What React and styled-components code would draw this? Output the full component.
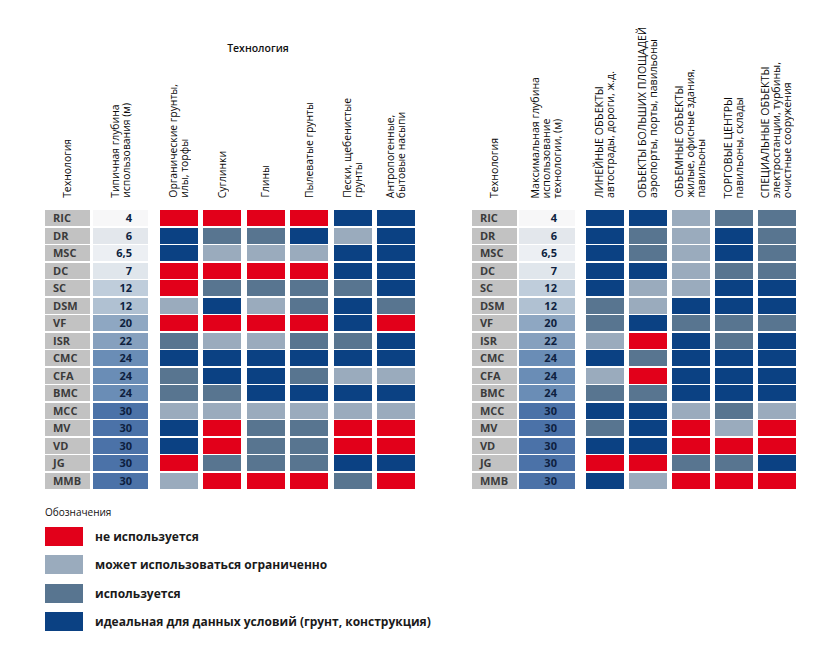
import React from 'react';
import styled, { createGlobalStyle } from 'styled-components';

const GlobalStyle = createGlobalStyle`
  html, body { margin: 0; padding: 0; background: #fff; }
  body { font-family: "Open Sans", "Noto Sans", sans-serif; color: #111; }
`;

const COLORS = { R: '#e2001a', L: '#9aabbd', M: '#587590', D: '#0b4183' };

const TECH = ['RIC', 'DR', 'MSC', 'DC', 'SC', 'DSM', 'VF', 'ISR', 'CMC', 'CFA', 'BMC', 'MCC', 'MV', 'VD', 'JG', 'MMB'];
const DEPTH = ['4', '6', '6,5', '7', '12', '12', '20', '22', '24', '24', '24', '30', '30', '30', '30', '30'];
const DEPTH_BG = ['#f7f7f8', '#e3e7ec', '#eceff3', '#e0e6ec', '#bfcddb', '#b0c1d2', '#8ea7c2', '#86a0be', '#6a8db6', '#6a8db6', '#6a8db6', '#4b72a8', '#4b72a8', '#4b72a8', '#4b72a8', '#4b72a8'];

const LEFT_DATA = [
  'RRRRDD', 'DMMDLD', 'DLLLDD', 'RRRRDD', 'RMMMMD', 'LDLMDM', 'RRRRDR', 'MLLMMD',
  'DDDDDD', 'MDDMLL', 'MMDDDD', 'LLLLLL', 'DRMMRR', 'DRMMRR', 'RMMMDD', 'LRRRMR',
];
const RIGHT_DATA = [
  'DDLMM', 'DMLDM', 'DMLDM', 'DDLMM', 'DLLDD', 'MLDDD', 'MDMMM', 'LRDMD',
  'DMDDD', 'LRDDD', 'MMDDD', 'DDLML', 'MDRLR', 'DDRRR', 'RRMMD', 'DLRRR',
];

const LEFT_HEADS = [
  ['Технология'],
  ['Типичная глубина', 'использования (м)'],
  ['Органические грунты,', 'илы, торфы'],
  ['Суглинки'],
  ['Глины'],
  ['Пылеватые грунты'],
  ['Пески, щебенистые', 'грунты'],
  ['Антропогенные,', 'бытовые насыпи'],
];
const RIGHT_HEADS = [
  ['Технология'],
  ['Максимальная глубина', 'использование', 'технологии, (м)'],
  ['ЛИНЕЙНЫЕ ОБЪЕКТЫ', 'автострады, дороги, ж.д.'],
  ['ОБЪЕКТЫ БОЛЬШИХ ПЛОЩАДЕЙ', 'аэропорты, порты, павильоны'],
  ['ОБЪЕМНЫЕ ОБЪЕКТЫ', 'жилые, офисные здания,', 'павильоны'],
  ['ТОРГОВЫЕ ЦЕНТРЫ', 'павильоны, склады'],
  ['СПЕЦИАЛЬНЫЕ ОБЪЕКТЫ', 'электростанции, турбины,', 'очистные сооружения'],
];

const LEFT_LAYOUT = { depthW: 55, depthMl: 3, dataMl: 12, gap: 5.4, padR: 16, fs: 10.4 };
const RIGHT_LAYOUT = { depthW: 56, depthMl: 2, dataMl: 11, gap: 5, padR: 18, fs: 10.6 };

const Page = styled.div`
  width: 838px;
  height: 669px;
  box-sizing: border-box;
  padding: 25px 0 0 45px;
`;

const Tables = styled.div`
  display: flex;
  gap: 57px;
`;

const Table = styled.div`
  display: flex;
  flex-direction: column;
`;

const HeaderArea = styled.div`
  height: 175px;
  display: flex;
  flex-direction: column;
  margin-bottom: 10px;
`;

const Title = styled.div`
  padding: 16px 0 0 56px;
  text-align: center;
  font-size: 10.5px;
  font-weight: 600;
  line-height: 14px;
  color: #111;
`;

const HeaderRow = styled.div`
  flex: 1;
  display: flex;
  align-items: flex-end;
`;

const HeadGroup = styled.div`
  display: flex;
  align-items: flex-end;
  gap: ${(p) => p.$gap}px;
  margin-left: ${(p) => p.$ml}px;
  height: 100%;
`;

const HeadCell = styled.div`
  width: ${(p) => p.$w}px;
  margin-left: ${(p) => p.$ml || 0}px;
  flex: none;
  height: 100%;
  display: flex;
  justify-content: center;
  align-items: flex-end;
  padding-bottom: 2px;
  box-sizing: border-box;
`;

const HeadText = styled.span`
  writing-mode: vertical-rl;
  transform: rotate(180deg);
  white-space: nowrap;
  font-size: ${(p) => p.$fs}px;
  line-height: 11px;
  color: #0a0a0a;
`;

const Body = styled.div`
  display: flex;
  flex-direction: column;
  gap: 1.5px;
`;

const Row = styled.div`
  display: flex;
  height: 16px;
`;

const Label = styled.div`
  width: 45px;
  flex: none;
  background: #c2c2c2;
  color: #3b3b3b;
  font-size: 11px;
  font-weight: 700;
  line-height: 16px;
  padding-left: 8px;
  box-sizing: border-box;
`;

const Depth = styled.div`
  width: ${(p) => p.$w}px;
  margin-left: ${(p) => p.$ml}px;
  flex: none;
  background: ${(p) => p.$bg};
  color: #0e1f40;
  font-size: 11px;
  font-weight: 700;
  line-height: 16px;
  text-align: right;
  padding-right: ${(p) => p.$pr}px;
  box-sizing: border-box;
`;

const Cells = styled.div`
  display: flex;
  gap: ${(p) => p.$gap}px;
  margin-left: ${(p) => p.$ml}px;
`;

const Cell = styled.div`
  width: 38px;
  height: 16px;
  background: ${(p) => p.$c};
`;

const Legend = styled.div`
  margin-top: 17px;
  display: flex;
  flex-direction: column;
`;

const LegendTitle = styled.div`
  font-size: 10px;
  line-height: 12px;
  color: #111;
  margin-bottom: 9px;
`;

const LegendItems = styled.div`
  display: flex;
  flex-direction: column;
  gap: 9.5px;
`;

const LegendItem = styled.div`
  display: flex;
  align-items: center;
  gap: 12px;
`;

const Swatch = styled.div`
  width: 38px;
  height: 19px;
  background: ${(p) => p.$c};
`;

const LegendText = styled.span`
  font-size: 12px;
  font-weight: 700;
  color: #1a1a1a;
`;

function Head({ lines, fs }) {
  return (
    <HeadText $fs={fs}>
      {lines.map((l, i) => (
        <React.Fragment key={i}>
          {i > 0 && <br />}
          {l}
        </React.Fragment>
      ))}
    </HeadText>
  );
}

function MatrixTable({ heads, data, layout, title }) {
  return (
    <Table>
      <HeaderArea>
        {title && <Title>{title}</Title>}
        <HeaderRow>
          <HeadCell $w={45}><Head lines={heads[0]} fs={layout.fs} /></HeadCell>
          <HeadCell $w={layout.depthW} $ml={layout.depthMl}><Head lines={heads[1]} fs={layout.fs} /></HeadCell>
          <HeadGroup $gap={layout.gap} $ml={layout.dataMl}>
            {heads.slice(2).map((h, i) => (
              <HeadCell key={i} $w={38}><Head lines={h} fs={layout.fs} /></HeadCell>
            ))}
          </HeadGroup>
        </HeaderRow>
      </HeaderArea>
      <Body>
        {TECH.map((t, r) => (
          <Row key={t}>
            <Label>{t}</Label>
            <Depth $w={layout.depthW} $ml={layout.depthMl} $bg={DEPTH_BG[r]} $pr={layout.padR}>{DEPTH[r]}</Depth>
            <Cells $gap={layout.gap} $ml={layout.dataMl}>
              {data[r].split('').map((k, c) => (
                <Cell key={c} $c={COLORS[k]} />
              ))}
            </Cells>
          </Row>
        ))}
      </Body>
    </Table>
  );
}

const LEGEND = [
  ['R', 'не используется'],
  ['L', 'может использоваться ограниченно'],
  ['M', 'используется'],
  ['D', 'идеальная для данных условий (грунт, конструкция)'],
];

export default function App() {
  return (
    <>
      <GlobalStyle />
      <Page>
        <Tables>
          <MatrixTable heads={LEFT_HEADS} data={LEFT_DATA} layout={LEFT_LAYOUT} title="Технология" />
          <MatrixTable heads={RIGHT_HEADS} data={RIGHT_DATA} layout={RIGHT_LAYOUT} />
        </Tables>
        <Legend>
          <LegendTitle>Обозначения</LegendTitle>
          <LegendItems>
            {LEGEND.map(([k, t]) => (
              <LegendItem key={k}>
                <Swatch $c={COLORS[k]} />
                <LegendText>{t}</LegendText>
              </LegendItem>
            ))}
          </LegendItems>
        </Legend>
      </Page>
    </>
  );
}
